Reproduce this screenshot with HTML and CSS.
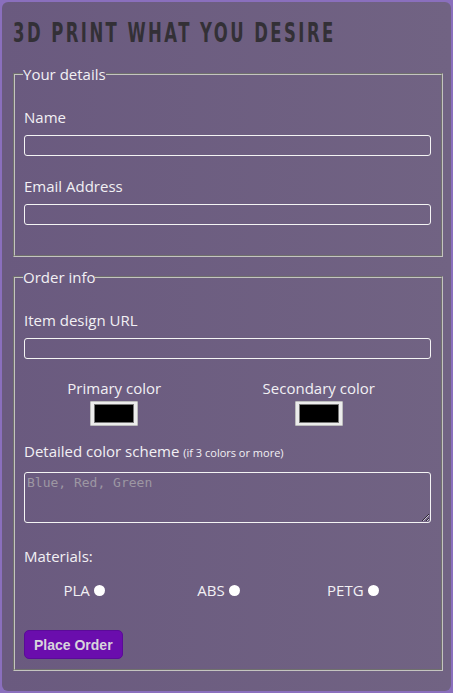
FILE: index.html
```html
<!DOCTYPE html>
<html>
<head>
<meta charset="utf-8">
<link rel="stylesheet" href="styles.css">
</head>
<body>
<main class="card">
  <h1 class="title"><span class="title-text">3D PRINT WHAT YOU DESIRE</span></h1>
  <form class="form">
    <fieldset class="group">
      <legend class="legend">Your details</legend>
      <label class="label first" for="name">Name</label>
      <input class="field" id="name" type="text">
      <label class="label" for="email">Email Address</label>
      <input class="field" id="email" type="email">
      <div class="spacer"></div>
    </fieldset>
    <fieldset class="group">
      <legend class="legend">Order info</legend>
      <label class="label first" for="url">Item design URL</label>
      <input class="field" id="url" type="url">
      <div class="colors">
        <div class="color-col">
          <label class="color-label" for="c1">Primary color</label>
          <input class="swatch" id="c1" type="color" value="#000000">
        </div>
        <div class="color-col">
          <label class="color-label" for="c2">Secondary color</label>
          <input class="swatch" id="c2" type="color" value="#000000">
        </div>
      </div>
      <label class="label scheme-label" for="scheme">Detailed color scheme <span class="small">(if 3 colors or more)</span></label>
      <textarea class="area" id="scheme" placeholder="Blue, Red, Green"></textarea>
      <p class="label materials">Materials:</p>
      <div class="radios">
        <label class="radio-item">PLA <input class="radio" type="radio" name="mat"></label>
        <label class="radio-item">ABS <input class="radio" type="radio" name="mat"></label>
        <label class="radio-item">PETG <input class="radio" type="radio" name="mat"></label>
      </div>
      <button class="btn" type="button">Place Order</button>
    </fieldset>
  </form>
</main>
</body>
</html>
```
FILE: styles.css
```css
html, body {
  margin: 0;
  padding: 0;
}
body {
  background: #8a6fbd;
  padding: 2px;
  font-family: "Open Sans", Roboto, sans-serif;
  color: #f2f0f4;
}
.card {
  background: linear-gradient(90deg, #6a5a7f 0%, #716383 100%);
  border-radius: 6px;
  padding: 1px 8px 18px 11px;
  min-height: 689px;
  box-sizing: border-box;
}
.title {
  font-family: "DejaVu Sans", sans-serif;
  font-weight: bold;
  font-size: 27px;
  letter-spacing: 4px;
  color: #333036;
  margin: 14px 0 0 0;
  line-height: 32px;
  white-space: nowrap;
  overflow: hidden;
}
.title-text {
  display: inline-block;
  transform: scaleX(0.61);
  transform-origin: left center;
}
.form {
  display: flex;
  flex-direction: column;
  gap: 11px;
  margin-top: 16px;
}
.group {
  margin: 0;
  border: 2px groove #c4c4c0;
  padding: 0 10px 10px 9px;
  min-width: 0;
}
.legend {
  padding: 0;
  font-size: 15px;
  line-height: 18px;
  margin-left: -1px;
}
.label {
  display: block;
  font-size: 15px;
  line-height: 18px;
  margin: 21px 0 9px 0;
}
.label.first {
  margin-top: 25px;
}
.field {
  display: block;
  width: 100%;
  box-sizing: border-box;
  height: 21px;
  background: transparent;
  border: 1px solid #f4f4f4;
  border-radius: 3px;
  margin: 0;
}
.spacer {
  height: 20px;
}
.colors {
  display: grid;
  grid-template-columns: 1fr 1fr;
  margin: 20px 10px 0 -12px;
}
.color-col {
  display: flex;
  flex-direction: column;
  align-items: center;
}
.color-label {
  font-size: 15px;
  line-height: 18px;
}
.swatch {
  margin-top: 4px;
  width: 48px;
  height: 25px;
  padding: 2px 3px;
  box-sizing: border-box;
  border: 1px solid #bdbdbd;
  border-radius: 1px;
  background: #ececec;
}
.swatch::-webkit-color-swatch-wrapper {
  padding: 0;
}
.swatch::-webkit-color-swatch {
  border: 1px solid #777;
  border-radius: 0;
}
.scheme-label {
  margin-top: 16px;
  margin-bottom: 10px;
}
.small {
  font-size: 11px;
}
.area {
  display: block;
  width: 100%;
  box-sizing: border-box;
  height: 51px;
  background: transparent;
  border: 1px solid #f4f4f4;
  border-radius: 3px;
  margin: 0;
  padding: 2px 2px;
  font-family: "DejaVu Sans Mono", monospace;
  font-size: 13px;
  resize: vertical;
}
.area::placeholder {
  color: #9d97a3;
}
.materials {
  margin-top: 24px;
}
.radios {
  display: grid;
  grid-template-columns: repeat(3, 1fr);
  margin: 16px 11px 0 -7px;
}
.radio-item {
  display: flex;
  align-items: center;
  justify-content: center;
  gap: 4px;
  font-size: 15px;
  line-height: 18px;
}
.radio {
  appearance: none;
  -webkit-appearance: none;
  width: 11px;
  height: 11px;
  border-radius: 50%;
  background: #ffffff;
  margin: 0;
  border: none;
}
.btn {
  display: block;
  margin-top: 31px;
  background: #6a0dad;
  border: 1px solid #5a0b98;
  border-radius: 5px;
  color: #d8d4dc;
  font-family: "Liberation Sans", Arial, sans-serif;
  font-weight: bold;
  font-size: 14px;
  height: 29px;
  padding: 0 9px;
}
```
